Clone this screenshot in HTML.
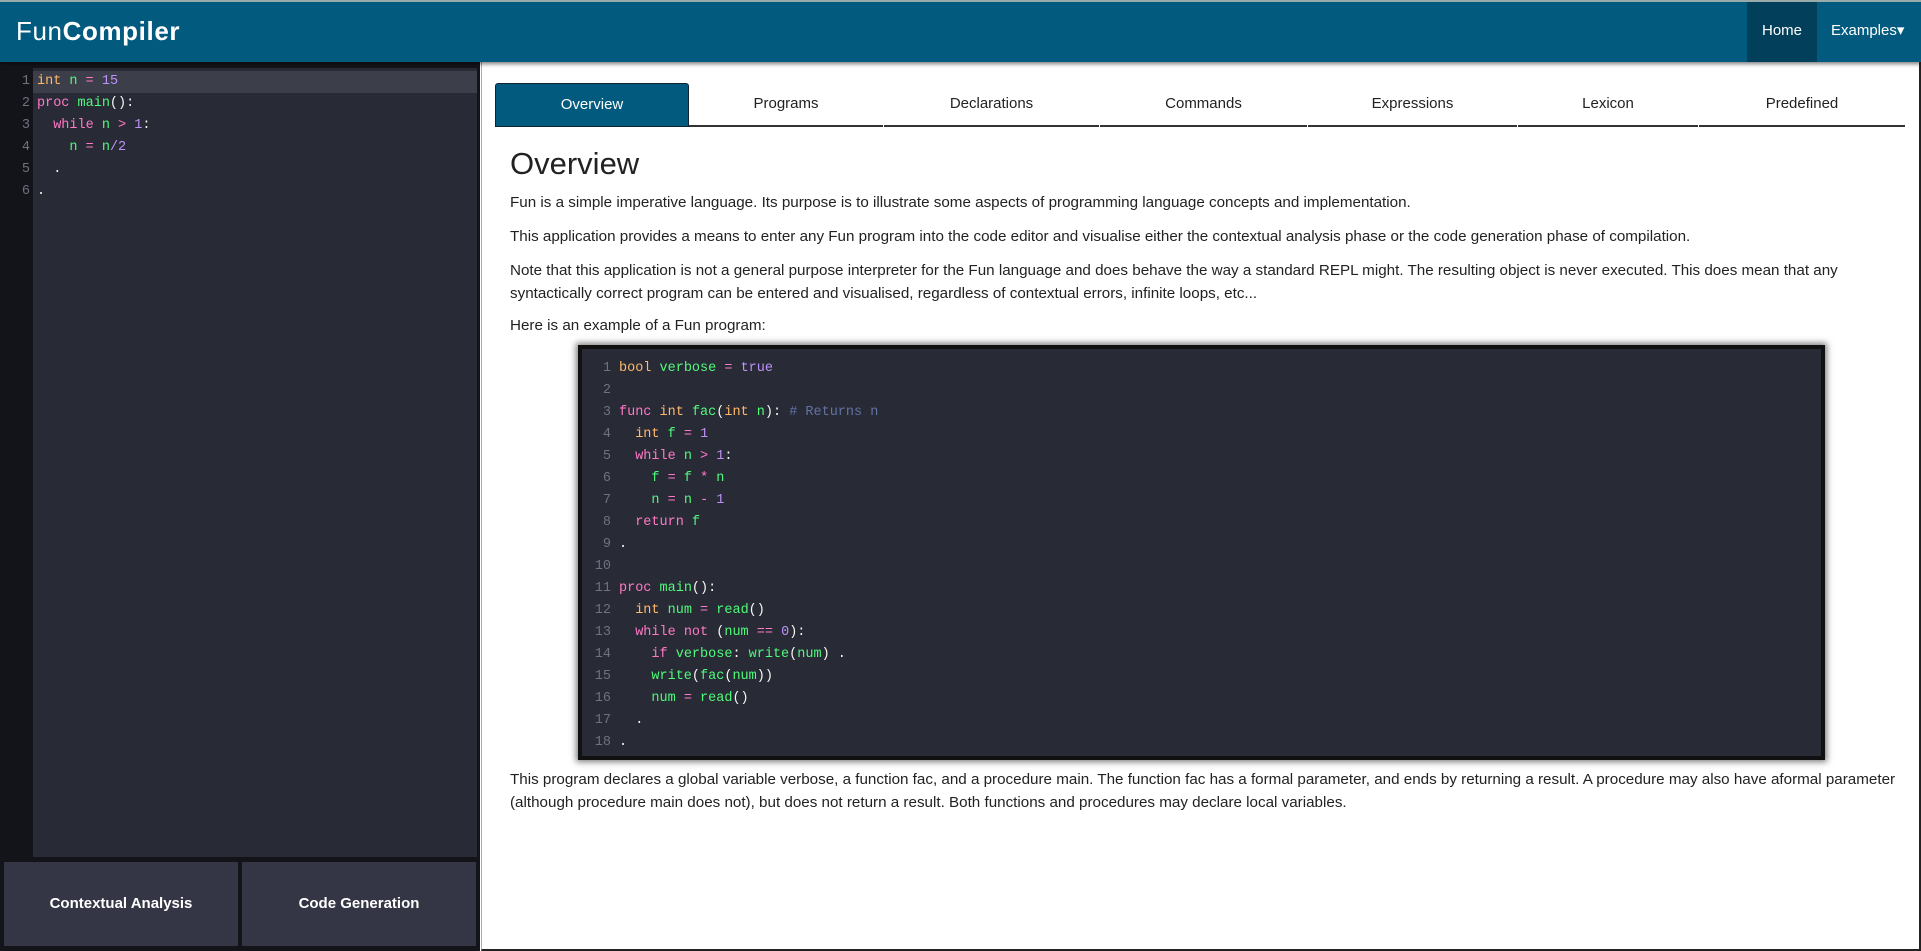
<!DOCTYPE html>
<html><head><meta charset="utf-8"><style>
*{box-sizing:border-box;margin:0;padding:0}
body{width:1921px;height:951px;overflow:hidden;background:#fff;font-family:"Liberation Sans",sans-serif;position:relative}
.hdr{position:absolute;left:0;top:0;width:1921px;height:62px;background:#025a7e;border-top:2px solid #9aa;box-shadow:0 2px 4px rgba(0,0,0,.5);z-index:2}
.logo{position:absolute;left:16px;top:14px;color:#fff;font-size:26px;letter-spacing:.6px}
.logo b{font-weight:600}
.home{position:absolute;left:1747px;top:0;width:70px;height:60px;background:#023f5a;color:#fff;font-size:15px;line-height:58px;text-align:center}
.ex{position:absolute;left:1831px;top:0;height:60px;color:#fff;font-size:15px;line-height:58px}
.left{position:absolute;left:0;top:62px;width:480px;height:889px;background:#131419}
.ed{position:absolute;left:33px;top:6px;width:444px;height:789px;background:#282a36}
.code{font-family:"Liberation Mono","DejaVu Sans Mono",monospace;font-size:13.5px;line-height:22px;white-space:pre}
.act{position:absolute;left:33px;top:9px;width:444px;height:22px;background:#3c3e49}
.btn{position:absolute;top:800px;height:84px;background:#343545;color:#fff;font-weight:bold;font-size:15px;text-align:center;line-height:84px}
.main{position:absolute;left:481px;top:62px;width:1440px;height:889px;border-right:2px solid #222;border-bottom:2px solid #222;border-left:1px solid #aaa}
.tab{position:absolute;top:83px;height:44px;border-bottom:2px solid #333;font-size:15px;text-align:center;line-height:42px;color:#222}
.tab.on{background:#025a7e;color:#fff;border:1px solid #123;border-radius:3px 3px 0 0}
h1{position:absolute;left:510px;top:146px;font-weight:normal;font-size:31px;color:#222}
p{position:absolute;left:510px;font-size:15.2px;color:#222;line-height:23px;width:1390px}
.cb{position:absolute;left:578px;top:345px;width:1247px;height:415px;background:#282a36;border:4px solid #111;box-shadow:0 0 6px 2px rgba(0,0,0,.5)}
.k{color:#ff79c6}.t{color:#ffb86c}.v{color:#50fa7b}.n{color:#bd93f9}.c{color:#6272a4}.w{color:#f8f8f2}
.lnc{position:absolute;left:0;width:30px;text-align:right;color:#6d7180}
</style></head><body>
<div class="hdr"><div class="logo">Fun<b>Compiler</b></div><div class="home">Home</div><div class="ex">Examples▾</div></div>
<div class="left">
<div class="ed"></div><div class="act"></div>
<div class="code lnc" style="top:9px">1
2
3
4
5
6</div>
<div class="code w" style="position:absolute;left:37px;top:9px"><span class="t">int</span> <span class="v">n</span> <span class="k">=</span> <span class="n">15</span>
<span class="k">proc</span> <span class="v">main</span>():
  <span class="k">while</span> <span class="v">n</span> <span class="k">&gt;</span> <span class="n">1</span>:
    <span class="v">n</span> <span class="k">=</span> <span class="v">n</span><span class="n">/2</span>
  .
.</div>
<div class="btn" style="left:4px;width:234px">Contextual Analysis</div>
<div class="btn" style="left:242px;width:234px">Code Generation</div>
</div>
<div class="main"></div>
<div class="tab on" style="left:495px;width:194px">Overview</div>
<div class="tab" style="left:689px;width:194px">Programs</div>
<div class="tab" style="left:884px;width:215px">Declarations</div>
<div class="tab" style="left:1100px;width:207px">Commands</div>
<div class="tab" style="left:1308px;width:209px">Expressions</div>
<div class="tab" style="left:1518px;width:180px">Lexicon</div>
<div class="tab" style="left:1699px;width:206px">Predefined</div>
<h1>Overview</h1>
<p style="top:191px">Fun is a simple imperative language. Its purpose is to illustrate some aspects of programming language concepts and implementation.</p>
<p style="top:225px">This application provides a means to enter any Fun program into the code editor and visualise either the contextual analysis phase or the code generation phase of compilation.</p>
<p style="top:259px">Note that this application is not a general purpose interpreter for the Fun language and does behave the way a standard REPL might. The resulting object is never executed. This does mean that any syntactically correct program can be entered and visualised, regardless of contextual errors, infinite loops, etc...</p>
<p style="top:314px">Here is an example of a Fun program:</p>
<div class="cb">
<div class="code lnc" style="top:9px;width:29px">1
2
3
4
5
6
7
8
9
10
11
12
13
14
15
16
17
18</div>
<div class="code w" style="position:absolute;left:37px;top:9px"><span class="t">bool</span> <span class="v">verbose</span> <span class="k">=</span> <span class="n">true</span>

<span class="k">func</span> <span class="t">int</span> <span class="v">fac</span>(<span class="t">int</span> <span class="v">n</span>): <span class="c"># Returns n</span>
  <span class="t">int</span> <span class="v">f</span> <span class="k">=</span> <span class="n">1</span>
  <span class="k">while</span> <span class="v">n</span> <span class="k">&gt;</span> <span class="n">1</span>:
    <span class="v">f</span> <span class="k">=</span> <span class="v">f</span> <span class="k">*</span> <span class="v">n</span>
    <span class="v">n</span> <span class="k">=</span> <span class="v">n</span> <span class="k">-</span> <span class="n">1</span>
  <span class="k">return</span> <span class="v">f</span>
.

<span class="k">proc</span> <span class="v">main</span>():
  <span class="t">int</span> <span class="v">num</span> <span class="k">=</span> <span class="v">read</span>()
  <span class="k">while</span> <span class="k">not</span> (<span class="v">num</span> <span class="k">==</span> <span class="n">0</span>):
    <span class="k">if</span> <span class="v">verbose</span>: <span class="v">write</span>(<span class="v">num</span>) .
    <span class="v">write</span>(<span class="v">fac</span>(<span class="v">num</span>))
    <span class="v">num</span> <span class="k">=</span> <span class="v">read</span>()
  .
.</div></div>
<p style="top:768px">This program declares a global variable verbose, a function fac, and a procedure main. The function fac has a formal parameter, and ends by returning a result. A procedure may also have aformal parameter (although procedure main does not), but does not return a result. Both functions and procedures may declare local variables.</p>
</body></html>
